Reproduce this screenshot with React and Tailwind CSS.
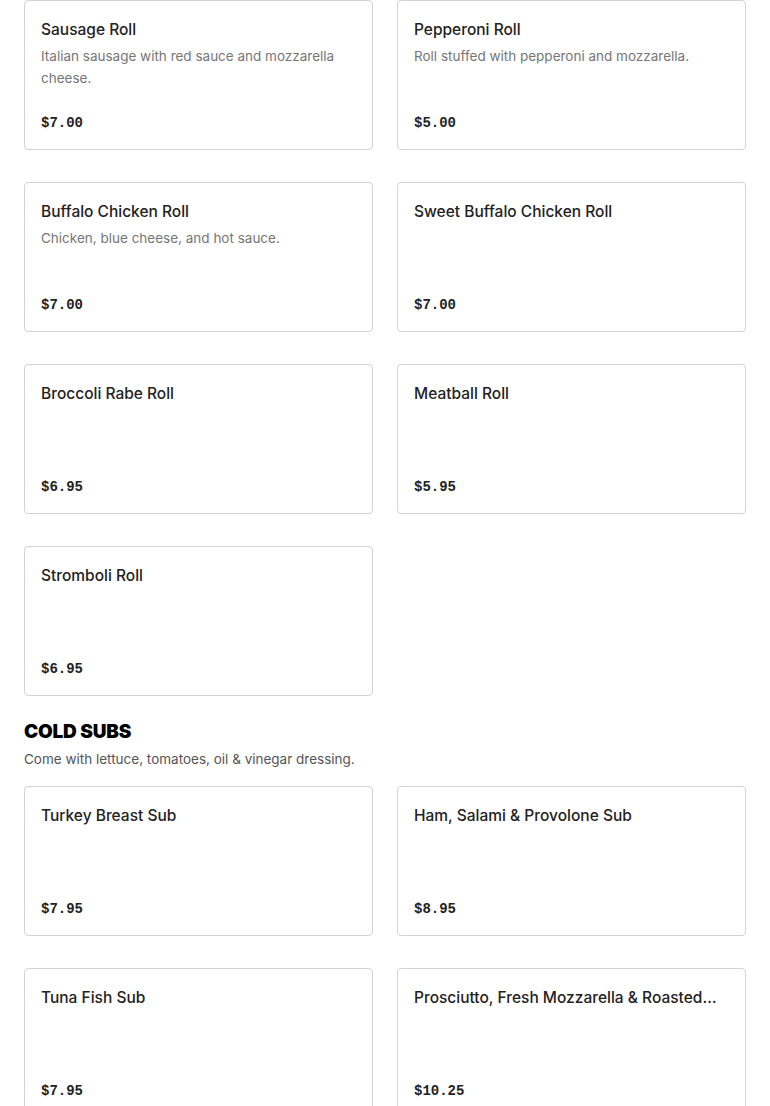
const rolls = [
  { name: "Sausage Roll", desc: "Italian sausage with red sauce and mozzarella cheese.", price: "$7.00" },
  { name: "Pepperoni Roll", desc: "Roll stuffed with pepperoni and mozzarella.", price: "$5.00" },
  { name: "Buffalo Chicken Roll", desc: "Chicken, blue cheese, and hot sauce.", price: "$7.00" },
  { name: "Sweet Buffalo Chicken Roll", price: "$7.00" },
  { name: "Broccoli Rabe Roll", price: "$6.95" },
  { name: "Meatball Roll", price: "$5.95" },
  { name: "Stromboli Roll", price: "$6.95" },
];

const coldSubs = [
  { name: "Turkey Breast Sub", price: "$7.95" },
  { name: "Ham, Salami & Provolone Sub", price: "$8.95" },
  { name: "Tuna Fish Sub", price: "$7.95" },
  { name: "Prosciutto, Fresh Mozzarella & Roasted Peppers Sub", price: "$10.25" },
];

function ItemCard({ item }) {
  return (
    <div className="flex h-[150px] flex-col justify-between rounded border border-[#d3d3d3] bg-white px-4 pt-[17px] pb-4">
      <div>
        <h3 className="truncate pr-3 text-[15.5px] leading-6 font-medium text-[#222]">{item.name}</h3>
        {item.desc && (
          <p className="mt-[3px] text-[13.5px] leading-[22px] text-[#767676]">{item.desc}</p>
        )}
      </div>
      <p className="font-['Liberation_Mono',monospace] text-[14px] leading-5 font-bold text-[#222]">
        {item.price}
      </p>
    </div>
  );
}

export default function App() {
  return (
    <div className="min-h-screen bg-white px-6 font-['Inter',sans-serif]">
      <div className="grid grid-cols-2 gap-x-6 gap-y-8">
        {rolls.map((item) => (
          <ItemCard key={item.name} item={item} />
        ))}
      </div>

      <section className="mt-[22px]">
        <h2 className="text-[19px] leading-7 font-black tracking-[-0.2px] text-black uppercase">Cold Subs</h2>
        <p className="mt-0.5 text-[13.5px] leading-[22px] text-[#555]">
          Come with lettuce, tomatoes, oil &amp; vinegar dressing.
        </p>
        <div className="mt-4 grid grid-cols-2 gap-x-6 gap-y-8">
          {coldSubs.map((item) => (
            <ItemCard key={item.name} item={item} />
          ))}
        </div>
      </section>
    </div>
  );
}
